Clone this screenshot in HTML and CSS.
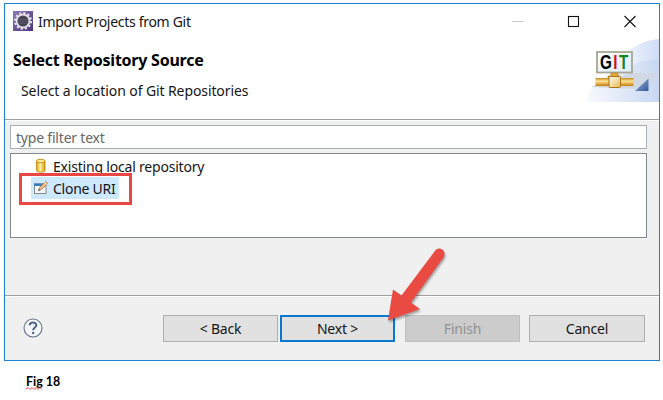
FILE: index.html
```
<!DOCTYPE html>
<html lang="en">
<head>
<meta charset="utf-8">
<title>Import Projects from Git</title>
<link rel="stylesheet" href="styles.css">
</head>
<body>
<main class="dialog">
  <header class="banner">
    <div class="titlebar">
      <svg class="app-icon" width="20" height="20" viewBox="0 0 20 20">
        <defs><linearGradient id="app" x2="1" y2="1"><stop stop-color="#8c78b4"/><stop offset="1" stop-color="#4b3478"/></linearGradient></defs>
        <rect width="20" height="20" fill="url(#app)"/>
        <circle cx="10" cy="10" r="8" fill="none" stroke="#e6e2ee" stroke-width="2" stroke-dasharray="2.3 1.89"/>
        <circle cx="10" cy="10" r="6.4" fill="#494254" stroke="#e6e3e9" stroke-width="1.8"/>
        <path d="M5 8.5h10M4.5 10.5h11M5 12.5h10" stroke="#655b78" stroke-width=".7"/>
      </svg>
      <span class="title">Import Projects from Git</span>
      <svg class="controls" width="126" height="14" viewBox="0 0 126 14" fill="none">
        <path d="M1 7.5h12" stroke="#ccc"/>
        <rect x="57.5" y="2.5" width="10" height="10" stroke="#111" stroke-width="1.1"/>
        <path d="M113.5 2l11 11m0-11l-11 11" stroke="#111" stroke-width="1.1"/>
      </svg>
    </div>
    <h1>Select Repository Source</h1>
    <p>Select a location of Git Repositories</p>
    <svg class="git-art" width="72" height="64" viewBox="0 0 72 64">
      <defs>
        <linearGradient id="sky"><stop stop-color="#fff"/><stop offset="1" stop-color="#cfddf6"/></linearGradient>
        <linearGradient id="cloud"><stop stop-color="#f4f7fd"/><stop offset="1" stop-color="#c7d6f1"/></linearGradient>
        <linearGradient id="pipe" x2="0" y2="1"><stop stop-color="#c68a1c"/><stop offset=".4" stop-color="#ffe395"/><stop offset="1" stop-color="#c27c0b"/></linearGradient>
        <linearGradient id="node" x2="1" y2="1"><stop stop-color="#fffdf0"/><stop offset="1" stop-color="#e8b94e"/></linearGradient>
        <linearGradient id="sign" x2="1" y2="1"><stop stop-color="#fff"/><stop offset="1" stop-color="#dcebf6"/></linearGradient>
        <linearGradient id="shade"><stop stop-color="#bbb" stop-opacity=".6"/><stop offset="1" stop-color="#d5d9e2" stop-opacity=".5"/></linearGradient>
        <linearGradient id="corner" x2="1" y2="1"><stop stop-color="#a5b9df"/><stop offset="1" stop-color="#315798"/></linearGradient>
      </defs>
      <path d="M22 64C20 28 42 3 72 1v63z" fill="url(#sky)"/>
      <path d="M0 64C3 45 13 42 28 40c10-12 26-18 44-19v43z" fill="url(#cloud)" opacity=".85"/>
      <path d="M4 49L44 35h28v5L49 51z" fill="url(#shade)"/>
      <rect x="10" y="14" width="35" height="20.500" fill="url(#sign)" stroke="#a6a895" stroke-width="1.800"/>
      <text class="git-word" transform="translate(13 31) scale(.76 1)">G<tspan fill="#cf1020">I</tspan><tspan fill="#16861c">T</tspan></text>
      <path d="M24 35h7v3h2v3H21v-3h3z" fill="#e4ad38" stroke="#b77d17" stroke-width=".7"/>
      <rect x="8.500" y="40" width="38" height="8" fill="url(#pipe)"/>
      <rect x="22" y="38.500" width="11.500" height="11" rx="1" fill="url(#node)" stroke="#aa7416"/>
      <path d="M61.500 40.500v12.500H48z" fill="url(#corner)"/>
    </svg>
  </header>
  <section class="content">
    <div class="filter"><span>type filter text</span></div>
    <div class="sources">
      <div class="source">
        <svg width="16" height="16" viewBox="0 0 16 16"><defs><linearGradient id="db"><stop stop-color="#d8a414"/><stop offset=".45" stop-color="#fff2a0"/><stop offset="1" stop-color="#d59c0d"/></linearGradient></defs><path d="M3.500 3v9.500c0 2.200 8.500 2.200 8.500 0V3z" fill="url(#db)" stroke="#c28a13" stroke-width=".9"/><ellipse cx="7.750" cy="3" rx="4.250" ry="1.700" fill="#ffeb91" stroke="#c28a13" stroke-width=".9"/></svg>
        <span class="existing">Existing local repository</span>
      </div>
      <div class="source selected">
        <svg width="16" height="16" viewBox="0 0 16 16"><rect x="1.500" y="4" width="11.500" height="9.500" fill="#eff8ff" stroke="#8b8b80"/><path d="M1 3.500h12v2.500H1z" fill="#3979b7"/><path d="M5.500 10.500l1-3 6-6 2.200 2-6.200 6z" fill="#f1bd7c" stroke="#a1775a" stroke-width=".8"/><path d="M11.500 2.500l2 2" stroke="#fff"/><path d="M5 11l1-2 1.200 1.200z" fill="#555"/></svg>
        <span class="clone">Clone URI</span>
      </div>
      <div class="highlight"></div>
    </div>
  </section>
  <footer class="actions">
    <svg class="help" width="20" height="20" viewBox="0 0 20 20"><circle cx="10" cy="10" r="9" fill="#f5f6f8" stroke="#64748d" stroke-width="1.1"/><path d="M6.700 7.300C6.800 3.500 13.500 3.600 13.300 7.300c-.1 2.400-3.200 2.500-3.200 5" fill="none" stroke="#52668a" stroke-width="2.100"/><circle cx="10.100" cy="15" r="1.250" fill="#52668a"/></svg>
    <button class="back"><span>&lt; Back</span></button>
    <button class="next"><span>Next &gt;</span></button>
    <button class="finish" disabled><span>Finish</span></button>
    <button class="cancel"><span>Cancel</span></button>
  </footer>
</main>
<div class="caption"><span class="misspelled">Fig</span> 18
  <svg class="squiggle" width="17" height="3" viewBox="0 0 17 3"><path d="M0 2L2 .5l2 2 2-2 2 2 2-2 2 2 2-2 2 2" fill="none" stroke="#e33" stroke-width=".9"/></svg>
</div>
<svg class="arrow" width="64" height="82" viewBox="0 0 64 82"><path d="M6 76.500L11 45.500l8.500 6L52.500 7.500c3.800-6.500 13-1 9 6L29 58.500l9 6.500z" fill="#e94b43"/></svg>
</body>
</html>
```

FILE: styles.css
```
* { box-sizing: border-box; }
body { margin: 0; height: 400px; overflow: hidden; background: #fff; color: #151515; font: 14px/20px "Noto Sans", sans-serif; }
.dialog { margin: 3px 0 0 4px; width: 656px; height: 358px; border: 1px solid #1c82d3; background: #f0f0f0; }
.banner { position: relative; height: 116px; border-bottom: 1px solid #a0a0a0; background: #fff; box-shadow: 0 1px #fff; }
.titlebar { display: flex; align-items: center; height: 34px; padding-left: 8px; }
.title { margin: 2px 0 0 5px; white-space: nowrap; letter-spacing: -.3px; }
.controls { margin: -1px 22px 0 auto; }
h1 { margin: 11px 0 0 8px; font-size: 16px; line-height: 22px; font-weight: 700; color: #000; letter-spacing: -.24px; }
p { margin: 10px 0 0 16px; letter-spacing: -.1px; }
.git-art { position: absolute; right: 0; bottom: 17px; }
.git-word { font: bold 20px "Liberation Sans", sans-serif; letter-spacing: 2px; }
.content { height: 175px; padding: 5px 12px 0 5px; }
.filter { height: 24px; padding: 2px 5px 0; border: 1px solid #a9adb5; background: #fff; color: #666; letter-spacing: -.2px; }
.sources { position: relative; height: 85px; margin-top: 4px; padding-top: 1px; border: 1px solid #828790; background: #fff; }
.source { display: flex; align-items: center; width: max-content; height: 22px; margin-left: 20px; padding: 0 3px 0 2px; }
.source span { margin: 1px 0 0 4px; white-space: nowrap; }
.existing { letter-spacing: -.2px; }
.clone { letter-spacing: -.25px; }
.selected { width: 88px; background: #cde8ff; }
.highlight { position: absolute; left: 8px; top: 19px; width: 113px; height: 32px; border: 3px solid #e94744; }
.actions { display: flex; align-items: center; height: 64px; padding: 2px 14px 0 18px; border-top: 1px solid #a0a0a0; box-shadow: inset 0 1px #fff; }
.help { margin: -2px 120px 0 0; }
button { width: 115px; height: 27px; padding: 0; border: 1px solid #adadad; background: #e1e1e1; font: 14px/20px "Noto Sans", sans-serif; color: #151515; }
.next { margin: 0 10px 0 2px; border: 2px solid #0878d1; }
.cancel { margin-left: 9px; width: 116px; }
.finish { border-color: #bfbfbf; background: #ccc; color: #929292; }
button span { letter-spacing: -.2px; }
.caption { position: relative; width: max-content; margin: 11px 0 0 26px; font: bold 12.4px/20px Lato, sans-serif; color: #000; }
.squiggle { position: absolute; left: 0; top: 15px; }
.arrow { position: absolute; left: 382px; top: 244px; overflow: visible; filter: drop-shadow(1px 2px 1px #0005); }
```
